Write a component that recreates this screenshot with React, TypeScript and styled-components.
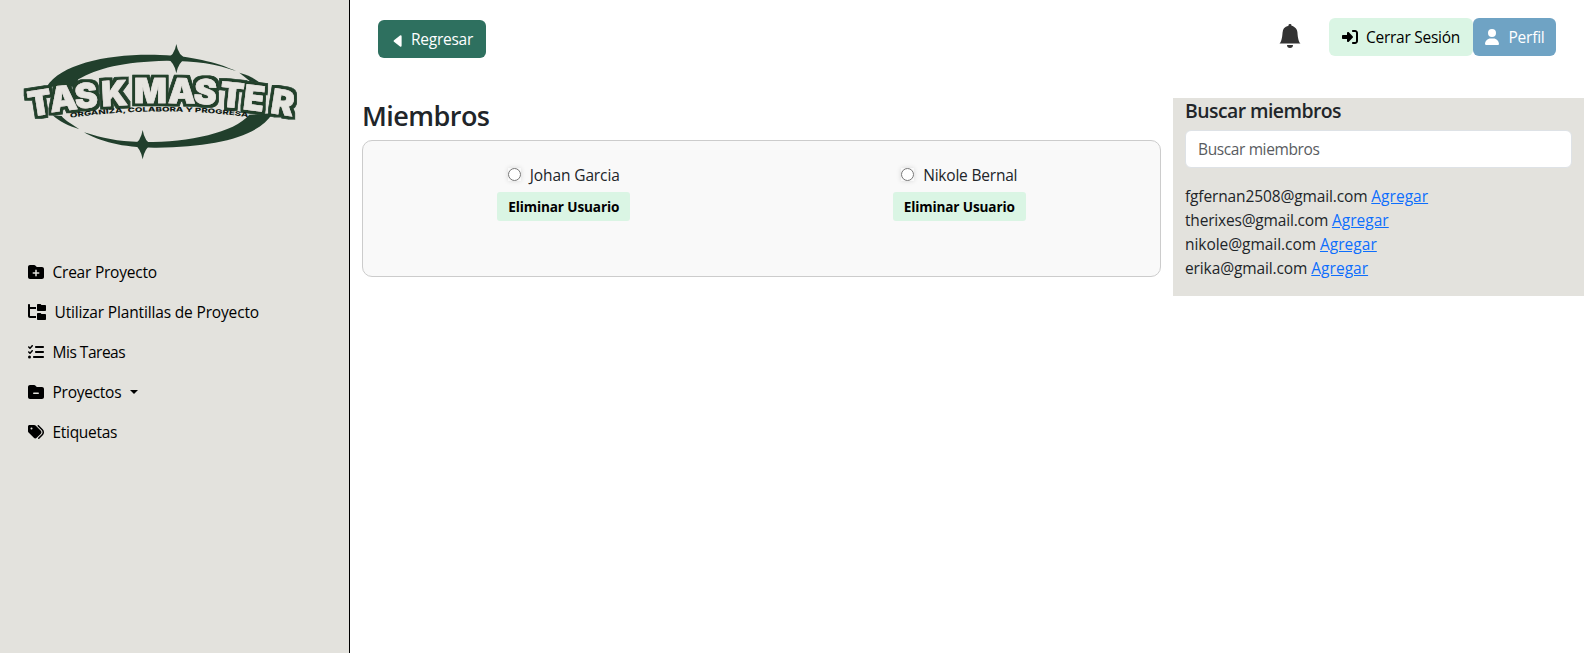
import React from "react";
import styled, { createGlobalStyle } from "styled-components";
import { FaFolderPlus, FaFolderTree, FaListCheck, FaFolderMinus, FaTags, FaRightToBracket, FaUser } from "react-icons/fa6";
import { BsBellFill } from "react-icons/bs";

const GlobalStyle = createGlobalStyle`
  *, *::before, *::after { box-sizing: border-box; }
  body {
    margin: 0;
    background: #fff;
    color: #212529;
    font: 400 15.5px/24px "Open Sans", "Noto Sans", sans-serif;
  }
  h2, h5, ul { margin: 0; padding: 0; }
`;

const Page = styled.div`
  display: flex;
  height: 653px;
  overflow: hidden;
`;

const Sidebar = styled.aside`
  flex: 0 0 350px;
  background: #e3e2dd;
  border-right: 1px solid #000;
`;

const Logo = styled.svg`
  display: block;
  width: 349px;
  height: 155px;
  margin-top: 20px;
`;

const Nav = styled.nav`
  display: flex;
  flex-direction: column;
  padding: 77px 28px 0;
`;

const NavItem = styled.a<{ $track: number; $iconWidth?: number }>`
  display: flex;
  align-items: center;
  gap: 8.5px;
  height: 40px;
  color: #000;
  white-space: nowrap;
  letter-spacing: ${(p) => p.$track}px;
  svg {
    flex: none;
    width: ${(p) => p.$iconWidth ?? 16}px;
    height: ${(p) => p.$iconWidth ?? 16}px;
  }
`;

const Caret = styled.span`
  border: 4.8px solid transparent;
  border-top-color: #000;
  border-bottom: 0;
`;

const Main = styled.main`
  flex: 1;
  min-width: 0;
`;

const TopBar = styled.header`
  display: flex;
  height: 98px;
  padding: 18px 28px 0;
  align-items: flex-start;
`;

const Actions = styled.div`
  display: flex;
  align-items: center;
  margin-left: auto;
`;

const Bell = styled(BsBellFill)`
  width: 24px;
  height: 24px;
  margin-right: 27px;
  margin-top: -2px;
  color: #333;
`;

const Button = styled.button<{ $bg: string; $fg: string; $w: number; $top?: number; $track: number }>`
  display: flex;
  align-items: center;
  justify-content: center;
  gap: 8px;
  width: ${(p) => p.$w}px;
  height: 38px;
  margin-top: ${(p) => p.$top ?? 0}px;
  padding: 0;
  border: 0;
  border-radius: 6px;
  background: ${(p) => p.$bg};
  color: ${(p) => p.$fg};
  font: inherit;
  letter-spacing: ${(p) => p.$track}px;
  white-space: nowrap;
  svg { flex: none; }
`;

const ButtonIcon = styled.span`
  display: flex;
  font-size: 16px;
`;

const BackArrow = styled.svg`
  width: 9px;
  height: 12px;
  margin: 4px 1px 0 2px;
`;

const Content = styled.div`
  display: flex;
  align-items: flex-start;
  gap: 12px;
  padding-left: 12px;
`;

const Members = styled.section`
  flex: 0 0 799px;
`;

const Title = styled.h2`
  font-size: 27px;
  font-weight: 600;
  line-height: 34px;
  padding: 1px 0 7px;
  letter-spacing: -0.55px;
`;

const MemberCard = styled.div`
  display: grid;
  grid-template-columns: 1fr 1fr;
  height: 137px;
  padding: 22px 3px 0;
  background: #f9f9f9;
  border: 1px solid #ccc;
  border-radius: 10px;
`;

const Member = styled.div`
  display: flex;
  flex-direction: column;
  align-items: center;
  gap: 5px;
`;

const MemberName = styled.label<{ $track: number }>`
  display: flex;
  align-items: center;
  gap: 9px;
  letter-spacing: ${(p) => p.$track}px;
`;

const Radio = styled.input.attrs({ type: "radio" })`
  width: 13px;
  height: 13px;
  margin: 0 0 1px;
  box-shadow: 0 0 5px rgba(0, 0, 0, 0.14);
`;

const RemoveButton = styled.button`
  width: 133px;
  height: 29px;
  padding: 0;
  border: 0;
  border-radius: 3px;
  background: #daf5e4;
  color: #000;
  font: 700 13.6px/21px "Open Sans", sans-serif;
  letter-spacing: -0.13px;
`;

const SearchPanel = styled.section`
  flex: 1;
  height: 198px;
  padding: 1px 12px 0;
  background: #e3e2dd;
`;

const SearchTitle = styled.h5`
  font-size: 19.4px;
  font-weight: 600;
  line-height: 24px;
  letter-spacing: -0.54px;
`;

const SearchInput = styled.input`
  display: block;
  width: 100%;
  height: 38px;
  margin: 7px 0 16px;
  padding: 6px 12px;
  border: 1px solid #dee2e6;
  border-radius: 6px;
  background: #fff;
  font: inherit;
  letter-spacing: -0.38px;
  &::placeholder { color: #595c5f; opacity: 1; }
`;

const Results = styled.ul`
  list-style: none;
`;

const Result = styled.li<{ $track: number }>`
  height: 24px;
  white-space: nowrap;
  letter-spacing: ${(p) => p.$track}px;
`;

const AddLink = styled.a`
  color: #0d6efd;
  text-decoration: underline;
  letter-spacing: 0.03px;
`;

const results = [
  { email: "fgfernan2508@gmail.com", track: -0.13 },
  { email: "therixes@gmail.com", track: -0.19 },
  { email: "nikole@gmail.com", track: -0.05 },
  { email: "erika@gmail.com", track: -0.11 },
];

const green = "#213f2c";
const cream = "#e6e5e0";
const wordmark = {
  x: "90 153 227 306 400 402 504 580 657 727 809",
  y: "290 277 266 259 257 250 249 250 258 267 278",
  rotate: "-9 -7 -5 -3 0 0 1 4 6 7 9",
  fontFamily: "Inter, sans-serif",
  fontWeight: 900,
  fontSize: 103,
  letterSpacing: 0,
  strokeLinejoin: "round" as const,
};

function TaskMasterLogo() {
  return (
    <Logo viewBox="0 0 1047 465">
      <defs>
        <filter id="outline" x="-5%" y="-20%" width="110%" height="140%">
          <feMorphology in="SourceAlpha" operator="dilate" radius="9" result="thick" />
          <feGaussianBlur in="thick" stdDeviation="1.2" result="soft" />
          <feFlood floodColor={green} />
          <feComposite in2="soft" operator="in" result="edge" />
          <feMerge>
            <feMergeNode in="edge" />
            <feMergeNode in="SourceGraphic" />
          </feMerge>
        </filter>
      </defs>
      <g fill={green}>
        <path d="M140 200C185 130 330 100 480 105C590 108 670 135 708 153C650 132 590 122 500 122C370 125 290 145 235 178L225 200Z" />
        <path d="M718 158C745 165 765 176 782 190L750 184Z" />
        <path d="M158 286C178 305 205 317 238 328C210 308 193 300 185 288Z" />
        <path d="M252 337C310 355 350 364 420 366C560 368 700 340 748 284L818 280C775 350 650 380 470 383C370 384 300 365 252 337Z" />
        <path d="M529 72Q535 108 560 115Q535 126 529 160Q523 126 498 115Q523 108 529 72Z" />
        <path d="M428 330Q434 366 456 373Q434 384 428 418Q422 384 400 373Q422 366 428 330Z" />
      </g>
      <text {...wordmark} fill={cream} stroke={cream} strokeWidth={2} filter="url(#outline)">TASK MASTER</text>
      <path id="tagline" d="M211 293Q480 256 750 292" fill="none" />
      <text fontFamily="Inter, sans-serif" fontWeight={800} fontSize={19} fill="#101a14" letterSpacing={0}>
        <textPath href="#tagline" textLength={535} lengthAdjust="spacingAndGlyphs">ORGANIZA, COLABORA Y PROGRESA</textPath>
      </text>
    </Logo>
  );
}

export default function App() {
  return (
    <>
      <GlobalStyle />
      <Page>
        <Sidebar>
          <TaskMasterLogo />
          <Nav>
            <NavItem $track={-0.23}><FaFolderPlus />Crear Proyecto</NavItem>
            <NavItem $track={-0.16} $iconWidth={18}><FaFolderTree />Utilizar Plantillas de Proyecto</NavItem>
            <NavItem $track={-0.48}><FaListCheck />Mis Tareas</NavItem>
            <NavItem $track={-0.26}><FaFolderMinus />Proyectos <Caret /></NavItem>
            <NavItem $track={-0.3}><FaTags />Etiquetas</NavItem>
          </Nav>
        </Sidebar>
        <Main>
          <TopBar>
            <Button $bg="#2e705f" $fg="#fff" $w={108} $top={2} $track={-0.24}>
              <BackArrow viewBox="0 0 9 12"><path d="M7 .4Q8.6-.3 8.6 1.4V10.6Q8.6 12.3 7 11.6L1 6.8Q.2 6 1 5.2Z" fill="currentColor" /></BackArrow>
              Regresar
            </Button>
            <Actions>
              <Bell />
              <Button $bg="#daf5e4" $fg="#000" $w={144} $track={-0.26}><ButtonIcon><FaRightToBracket /></ButtonIcon>Cerrar Sesión</Button>
              <Button $bg="#6fa3c4" $fg="#fff" $w={83} $track={-0.22}><ButtonIcon><FaUser /></ButtonIcon>Perfil</Button>
            </Actions>
          </TopBar>
          <Content>
            <Members>
              <Title>Miembros</Title>
              <MemberCard>
                <Member>
                  <MemberName $track={-0.12}><Radio name="member" />Johan Garcia</MemberName>
                  <RemoveButton>Eliminar Usuario</RemoveButton>
                </Member>
                <Member>
                  <MemberName $track={-0.2}><Radio name="member" />Nikole Bernal</MemberName>
                  <RemoveButton>Eliminar Usuario</RemoveButton>
                </Member>
              </MemberCard>
            </Members>
            <SearchPanel>
              <SearchTitle>Buscar miembros</SearchTitle>
              <SearchInput placeholder="Buscar miembros" />
              <Results>
                {results.map((r) => (
                  <Result key={r.email} $track={r.track}>{r.email} <AddLink>Agregar</AddLink></Result>
                ))}
              </Results>
            </SearchPanel>
          </Content>
        </Main>
      </Page>
    </>
  );
}
